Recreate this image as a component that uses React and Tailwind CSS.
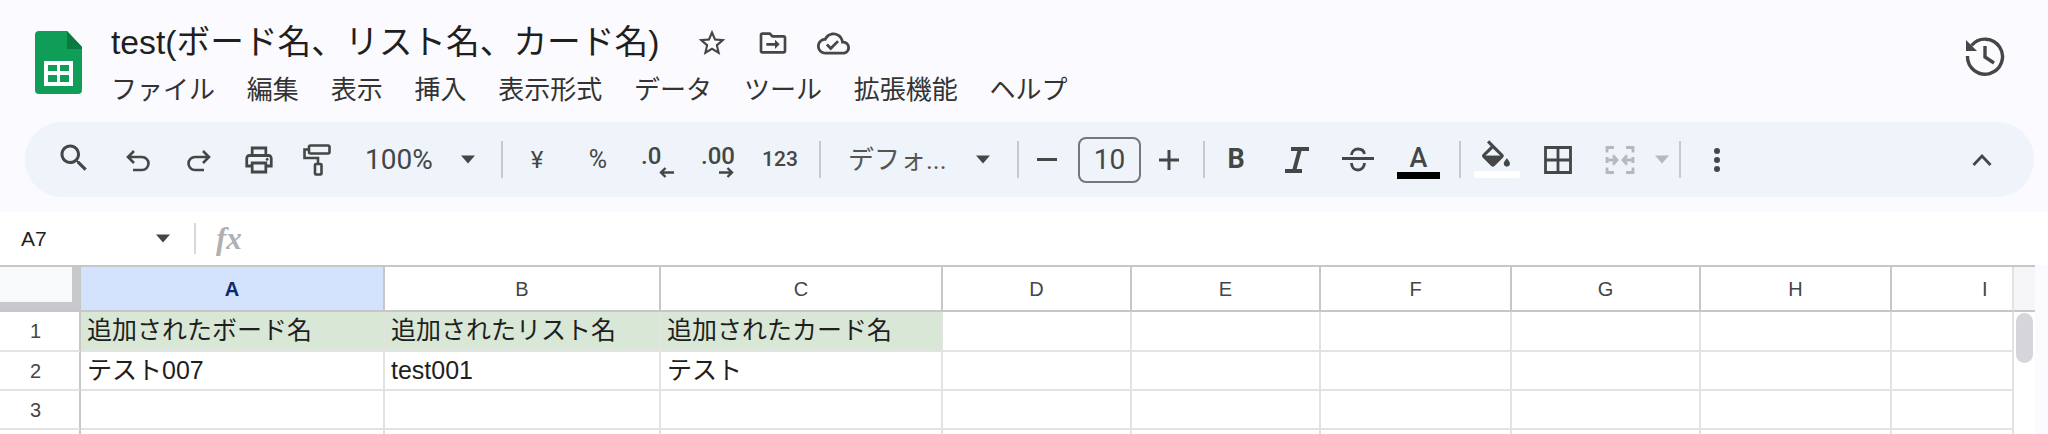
import React from "react";

const UI = { fontFamily: 'Roboto, "Noto Sans CJK JP", sans-serif' };
const CELL = { fontFamily: '"Liberation Sans", "Noto Sans CJK JP", sans-serif' };
const ICON = "#444746";

const Sep = ({ className }) => <div className={`w-[2px] h-[37px] bg-[#c7c9cc] ${className}`} />;

const Caret = ({ className, color = ICON }) => (
  <svg className={className} width="16" height="9" viewBox="0 0 16 9">
    <path d="M1 0.5h14L8 8.5z" fill={color} />
  </svg>
);

const Arrow = ({ dir, className }) => (
  <svg className={className} width="15" height="11" viewBox="0 0 15 11" fill="none" stroke={ICON} strokeWidth="2.4">
    {dir === "left" ? <path d="M15 5.5H2M6.5 1L2 5.5 6.5 10" /> : <path d="M0 5.5h13M8.5 1L13 5.5 8.5 10" />}
  </svg>
);

const Toolbar = () => (
  <div style={UI} className="mx-[25px] w-[2009px] h-[75px] rounded-[37px] bg-[#eff3fa] flex items-center text-[#444746] pl-[31px] pr-[42px]">
    <svg className="ml-0 -mt-[4px]" width="36" height="36" viewBox="0 0 24 24" fill={ICON}>
      <path d="M15.5 14h-.79l-.28-.27C15.41 12.59 16 11.11 16 9.5 16 5.91 13.09 3 9.5 3S3 5.91 3 9.5 5.91 16 9.5 16c1.61 0 3.09-.59 4.23-1.57l.27.28v.79l5 4.99L20.49 19l-4.99-5zm-6 0C7.01 14 5 11.99 5 9.5S7.01 5 9.5 5 14 7.01 14 9.5 11.99 14 9.5 14z" />
    </svg>
    <svg className="ml-[32px] mt-[2px]" width="28" height="24" viewBox="0 0 28 24" fill="none" stroke={ICON} strokeWidth="2.6">
      <path d="M10 2L4 8l6 6M4 8h14a6.5 6.5 0 0 1 0 13H9" />
    </svg>
    <svg className="ml-[33px] mt-[2px]" width="28" height="24" viewBox="0 0 28 24" fill="none" stroke={ICON} strokeWidth="2.6">
      <path d="M18 2l6 6-6 6M24 8H10a6.5 6.5 0 0 0 0 13h9" />
    </svg>
    <svg className="ml-[31px]" width="30" height="30" viewBox="1 2 22 20" preserveAspectRatio="none" fill={ICON}>
      <path d="M19 8h-1V3H6v5H5c-1.66 0-3 1.34-3 3v6h4v4h12v-4h4v-6c0-1.66-1.34-3-3-3zM8 5h8v3H8V5zm8 12v2H8v-4h8v2zm2-2v-2H6v2H4v-4c0-.55.45-1 1-1h14c.55 0 1 .45 1 1v4h-2z" />
      <circle cx="18" cy="11.5" r="1" />
    </svg>
    <svg className="ml-[29px]" width="28" height="32" viewBox="0 0 28 32" fill="none" stroke={ICON} strokeWidth="2.6">
      <rect x="6" y="1.5" width="20.5" height="8" rx="1.5" />
      <path d="M6 5.5H1.5V14H15v6" />
      <rect x="12" y="20" width="6.5" height="10.5" rx="1" />
    </svg>
    <span className="ml-[34px] w-[72px] text-[28px] leading-none whitespace-nowrap">100%</span>
    <Caret className="ml-[23px]" />
    <Sep className="ml-[25px]" />
    <span className="ml-[24px] w-[20px] text-center text-[24px] leading-none">¥</span>
    <span className="ml-[39px] w-[24px] flex justify-center text-[25px] leading-none">%</span>
    <div className="ml-[30px] w-[36px] flex flex-col mt-[4px]">
      <span className="pl-[1px] text-[24px] font-medium leading-[20px]">.0</span>
      <Arrow dir="left" className="ml-[19px] mt-[1px]" />
    </div>
    <div className="ml-[18px] w-[48px] flex flex-col mt-[4px]">
      <span className="pl-[7px] text-[24px] font-medium leading-[20px]">.00</span>
      <Arrow dir="right" className="ml-[25px] mt-[1px]" />
    </div>
    <span className="ml-[18px] w-[40px] flex justify-center text-[21px] font-medium leading-none">123</span>
    <Sep className="ml-[19px]" />
    <span className="ml-[27px] w-[100px] text-[26px] leading-none whitespace-nowrap text-[#555]">デフォ...</span>
    <Caret className="ml-[27px]" />
    <Sep className="ml-[26px]" />
    <div className="ml-[18px] w-[20px] h-[3px] bg-[#444746]" />
    <div className="ml-[21px] w-[63px] h-[46px] rounded-[8px] border-2 border-[#74777b] flex items-center justify-center text-[28px] leading-none">10</div>
    <svg className="ml-[18px]" width="20" height="20" viewBox="0 0 20 20" fill="none" stroke={ICON} strokeWidth="3">
      <path d="M0 10h20M10 0v20" />
    </svg>
    <Sep className="ml-[24px]" />
    <span className="ml-[19px] w-[24px] text-center text-[27px] font-bold leading-none">B</span>
    <svg className="ml-[37px]" width="24" height="26" viewBox="0 0 24 26" fill="none" stroke={ICON} strokeWidth="4">
      <path d="M6 2h18M0 24h17M15 2L9 24" />
    </svg>
    <svg className="ml-[33px]" width="32" height="26" viewBox="0 0 32 26" fill="none" stroke={ICON} strokeWidth="2.8">
      <path d="M0 11.5h32M9.5 8c0-3 2.5-6 6.5-6 3.5 0 6 2 6.5 5M22.5 16c0 4-3 7-6.5 7-4 0-6.5-3-6.5-7" />
    </svg>
    <div className="ml-[23px] w-[43px] flex flex-col items-center mt-[5px]">
      <span className="text-[27px] font-medium leading-[24px]">A</span>
      <div className="mt-[2px] w-[43px] h-[7px] bg-black" />
    </div>
    <Sep className="ml-[19px]" />
    <div className="ml-[13px] w-[46px] flex flex-col items-center -mt-[1px]">
      <svg className="mr-[2px]" width="28" height="27" viewBox="3 0 18 17" fill={ICON}>
        <path d="M16.56 8.94L7.62 0 6.21 1.41l2.38 2.38-5.15 5.15c-.59.59-.59 1.54 0 2.12l5.5 5.5c.29.29.68.44 1.06.44s.77-.15 1.06-.44l5.5-5.5c.59-.58.59-1.53 0-2.12zM5.21 10L10 5.21 14.79 10H5.21zM19 11.5s-2 2.17-2 3.5c0 1.1.9 2 2 2s2-.9 2-2c0-1.33-2-3.5-2-3.5z" />
        <path d="M4.5 10h11l-5.5 5.5z" />
      </svg>
      <div className="mt-[4px] w-[46px] h-[7px] bg-white rounded-[2px]" />
    </div>
    <svg className="ml-[24px]" width="28" height="28" viewBox="0 0 28 28" fill="none" stroke={ICON} strokeWidth="2.8">
      <path d="M1.5 1.5h25v25h-25zM14 1.5v25M1.5 14h25" />
    </svg>
    <svg className="ml-[33px]" width="30" height="28" viewBox="0 0 30 28" fill="none" stroke="#b4b8c0" strokeWidth="2.8">
      <path d="M9 1.5H2v5M2 11v6M2 21.5v5h7M21 1.5h7v5M28 11v6M28 21.5v5h-7" />
      <path d="M3 14h8M8 9.500l4 4.500-4 4.500M27 14h-8M22 9.500L18 14l4 4.500" />
    </svg>
    <Caret className="ml-[19px]" color="#b4b8c0" />
    <Sep className="ml-[9px]" />
    <div className="ml-[33px] w-[8px] flex flex-col gap-[3px]">
      <div className="w-[6px] h-[6px] rounded-full bg-[#444746]" />
      <div className="w-[6px] h-[6px] rounded-full bg-[#444746]" />
      <div className="w-[6px] h-[6px] rounded-full bg-[#444746]" />
    </div>
    <svg className="ml-auto" width="20" height="12" viewBox="0 0 20 12" fill="none" stroke={ICON} strokeWidth="2.8">
      <path d="M1.5 11L10 2l8.500 9" />
    </svg>
  </div>
);

const Header = () => (
  <div className="h-[122px] flex pl-[35px] pr-[43px] pt-[31px]">
    <svg width="47" height="63" viewBox="0 0 47 63">
      <path d="M4 0h28l15 16v43a4 4 0 0 1-4 4H4a4 4 0 0 1-4-4V4a4 4 0 0 1 4-4z" fill="#0f9d58" />
      <path d="M32 0l15 16v2H32z" fill="#0a7a3e" />
      <path d="M9 30h29v25H9zM13 34v6h9v-6zM25 34v6h9v-6zM13 44v7h9v-7zM25 44v7h9v-7z" fill="#fff" fillRule="evenodd" />
    </svg>
    <div className="ml-[29px] flex flex-col">
      <div className="flex items-center h-[24px]">
        <span style={CELL} className="w-[549px] text-[33.700px] leading-none text-[#1f1f1f] whitespace-nowrap">test(ボード名、リスト名、カード名)</span>
        <svg className="ml-[36px]" width="32" height="32" viewBox="0 0 24 24" fill={ICON}>
          <path d="M22 9.240l-7.19-.62L12 2 9.190 8.630 2 9.240l5.460 4.730L5.820 21 12 17.270 18.180 21l-1.630-7.030L22 9.240zM12 15.400l-3.760 2.270 1-4.280-3.320-2.880 4.380-.38L12 6.100l1.710 4.040 4.380.38-3.320 2.880 1 4.280L12 15.400z" />
        </svg>
        <svg className="ml-[29px]" width="32" height="32" viewBox="0 0 24 24" fill={ICON}>
          <path d="M20 6h-8l-2-2H4c-1.100 0-2 .9-2 2v12c0 1.100.9 2 2 2h16c1.100 0 2-.9 2-2V8c0-1.100-.9-2-2-2zm0 12H4V6h5.170l2 2H20v10z" />
          <path d="M7 12h6.500v-2.500L17 13l-3.500 3.500V14H7z" />
        </svg>
        <svg className="ml-[28px]" width="33" height="33" viewBox="0 0 24 24" fill={ICON}>
          <path d="M19.350 10.040C18.670 6.590 15.640 4 12 4 9.110 4 6.600 5.640 5.350 8.040 2.340 8.360 0 10.910 0 14c0 3.310 2.690 6 6 6h13c2.760 0 5-2.240 5-5 0-2.640-2.050-4.780-4.650-4.960zM19 18H6c-2.210 0-4-1.790-4-4 0-2.050 1.530-3.760 3.560-3.970l1.070-.11.5-.95C8.080 7.140 9.940 6 12 6c2.620 0 4.880 1.860 5.390 4.430l.3 1.500 1.530.11c1.560.1 2.780 1.410 2.780 2.960 0 1.650-1.350 3-3 3zm-9-3.820l-2.090-2.090L6.500 13.500 10 17l6.010-6.010-1.410-1.410z" />
        </svg>
      </div>
      <div style={UI} className="mt-[22px] flex gap-[31.800px] text-[26px] leading-[26px] text-[#333] whitespace-nowrap">
        {["ファイル", "編集", "表示", "挿入", "表示形式", "データ", "ツール", "拡張機能", "ヘルプ"].map((m) => (
          <span key={m}>{m}</span>
        ))}
      </div>
    </div>
    <svg className="ml-auto mt-[5px]" width="40" height="40" viewBox="0 0 40 40" fill="none" stroke={ICON} strokeWidth="3.4">
      <path d="M6.500 9.500A17.500 17.500 0 1 1 2.500 20" />
      <path d="M1 4v11h11z" fill={ICON} stroke="none" />
      <path d="M20 10v11l9 6" />
    </svg>
  </div>
);

const FormulaBar = () => (
  <div className="mt-[15px] h-[53px] bg-white flex items-center pl-[21px]">
    <span style={CELL} className="w-[134px] text-[21px] text-[#1f1f1f] leading-none">A7</span>
    <Caret className="" />
    <div className="ml-[23px] w-[2px] h-[31px] bg-[#d9d9d9]" />
    <span className="ml-[20px] text-[31px] leading-none italic font-bold text-[#b0b0b0]" style={{ fontFamily: '"Liberation Serif", serif' }}>fx</span>
  </div>
);

const H = "border-r-2 border-b-2 border-[#c7c7c7]";
const L = "border-r-2 border-b-2 border-[#e3e3e3]";
const letters = ["B", "C", "D", "E", "F", "G", "H"];

const Row = ({ n, cells, green }) => (
  <>
    <div className={`border-r-2 border-r-[#c7c7c7] border-b-2 border-b-[#e3e3e3] pr-[8px] flex items-center justify-center text-[20px] text-[#444746] bg-white`}>{n}</div>
    {Array.from({ length: 8 }).map((_, i) => (
      <div
        key={i}
        className={`flex items-center pl-[6px] text-[25px] text-[#1f1f1f] whitespace-nowrap overflow-hidden ${L} ${green && i < 3 ? "bg-[#d9e7d6] border-[#cbdcc8]" : "bg-white"}`}
      >
        {cells && cells[i]}
      </div>
    ))}
    <div className={`${L} bg-white border-r-[#e3e3e3]`} />
  </>
);

const Grid = () => (
  <div className="flex h-[169px]">
    <div style={CELL} className="w-[2035px] relative grid grid-cols-[81px_304px_276px_282px_189px_189px_191px_189px_191px_122px_21px] grid-rows-[45px_40px_39px_39px_6px] border-t-2 border-[#c7c7c7] h-[169px] overflow-hidden">
      <div className={`${H} bg-[#c7c9cc] border-r-0 border-b-0 w-[81px]`}>
        <div className="w-[72px] h-[35px] bg-[#f8f9fa]" />
      </div>
      <div className={`${H} bg-[#d3e3fd] flex items-center justify-center text-[20px] font-bold text-[#0b2a6b]`}>A</div>
      {letters.map((l) => (
        <div key={l} className={`${H} bg-white flex items-center justify-center text-[20px] text-[#444746]`}>{l}</div>
      ))}
      <div className="border-b-2 border-r-2 border-b-[#c7c7c7] border-r-[#e3e3e3] bg-white flex items-center pl-[90px] text-[20px] text-[#444746]">I</div>
      <div className="border-b-2 border-[#c7c7c7] bg-[#f6f6f9]" />

      <Row n="1" green cells={["追加されたボード名", "追加されたリスト名", "追加されたカード名"]} />
      <div className="bg-white row-span-4 pl-[2px] pt-[1px]">
        <div className="w-[17px] h-[50px] rounded-full bg-[#d5d5da]" />
      </div>
      <Row n="2" cells={["テスト007", "test001", "テスト"]} />
      <Row n="3" />
      <Row n="" />
    </div>
    <div className="flex-1 bg-[#fafaff]" />
  </div>
);

export default function App() {
  return (
    <div className="w-[2048px] h-[434px] overflow-hidden bg-[#fbfbff]">
      <Header />
      <Toolbar />
      <FormulaBar />
      <Grid />
    </div>
  );
}
